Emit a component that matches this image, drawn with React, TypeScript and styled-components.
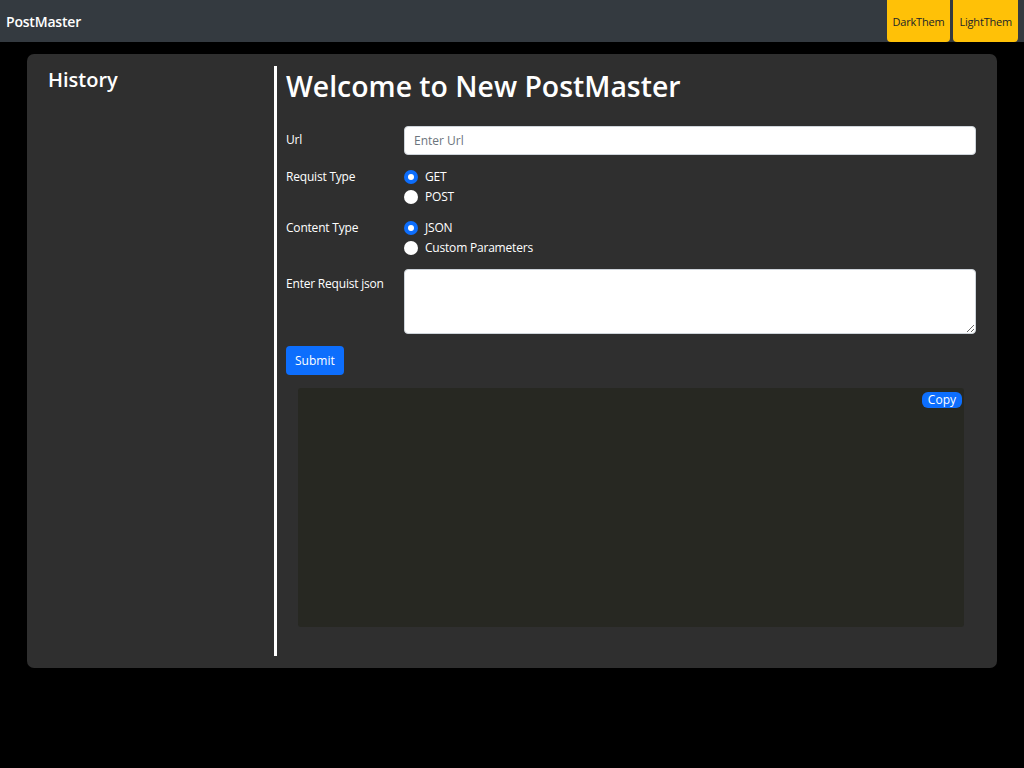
import React from "react";
import styled, { createGlobalStyle } from "styled-components";

const Global = createGlobalStyle`
  html, body { margin: 0; padding: 0; background: #000; }
  body { font-family: "Open Sans", "Noto Sans", sans-serif; color: #fff; }
  * { box-sizing: border-box; }
`;

const Page = styled.div`
  min-height: 768px;
  background: #000;
`;

const NavBar = styled.nav`
  height: 42px;
  background: #343a40;
  display: flex;
  align-items: center;
  justify-content: space-between;
  padding-left: 6px;
  padding-right: 6px;
`;

const Brand = styled.div`
  font-size: 14px;
  font-weight: 600;
  color: #fff;
  letter-spacing: -0.2px;
`;

const ThemeGroup = styled.div`
  display: flex;
  gap: 3px;
  align-self: flex-start;
`;

const ThemeButton = styled.button`
  height: 42px;
  background: #ffc107;
  border: none;
  border-radius: 0 0 4px 4px;
  color: #212529;
  font-family: inherit;
  font-size: 11px;
  padding: 0 6px;
  letter-spacing: -0.2px;
`;

const Card = styled.main`
  margin: 12px 27px 0 27px;
  height: 614px;
  background: #2f2f2f;
  border-radius: 7px;
  display: flex;
  padding: 12px 0;
`;

const Sidebar = styled.aside`
  width: 250px;
  padding-left: 21px;
  border-right: 3px solid #fff;
`;

const SideTitle = styled.h2`
  margin: 0;
  font-size: 20px;
  font-weight: 600;
  line-height: 28px;
`;

const Content = styled.section`
  flex: 1;
  padding-left: 9px;
  padding-right: 21px;
`;

const Title = styled.h1`
  margin: 2px 0 22px 0;
  font-size: 28.4px;
  font-weight: 600;
  line-height: 36px;
`;

const FormRow = styled.div<{ $gap?: number }>`
  display: grid;
  grid-template-columns: 118px 1fr;
  align-items: start;
  margin-bottom: ${(p) => p.$gap ?? 12}px;
`;

const Label = styled.label<{ $top?: number }>`
  font-size: 12px;
  padding-top: ${(p) => p.$top ?? 0}px;
  line-height: 16px;
  letter-spacing: -0.2px;
`;

const TextInput = styled.input`
  width: 100%;
  height: 29px;
  border-radius: 4px;
  border: 1px solid #ced4da;
  padding: 0 9px;
  font-family: inherit;
  font-size: 12px;
  background: #fff;
  &::placeholder { color: #6c757d; }
`;

const TextArea = styled.textarea`
  width: 100%;
  height: 65px;
  border-radius: 4px;
  border: 1px solid #ced4da;
  background: #fff;
  display: block;
`;

const RadioList = styled.div`
  display: flex;
  flex-direction: column;
  gap: 4px;
`;

const RadioItem = styled.label`
  display: flex;
  align-items: center;
  gap: 7px;
  font-size: 12px;
  line-height: 16px;
  letter-spacing: -0.2px;
`;

const RadioDot = styled.span<{ $on?: boolean }>`
  width: 14px;
  height: 14px;
  border-radius: 50%;
  background: ${(p) => (p.$on ? "#0d6efd" : "#fff")};
  display: flex;
  align-items: center;
  justify-content: center;
  flex-shrink: 0;
  &::after {
    content: "";
    width: 6px;
    height: 6px;
    border-radius: 50%;
    background: #fff;
    display: ${(p) => (p.$on ? "block" : "none")};
  }
`;

const SubmitButton = styled.button`
  background: #0d6efd;
  color: #fff;
  border: none;
  border-radius: 4px;
  height: 29px;
  padding: 0 9px;
  font-family: inherit;
  font-size: 12px;
  margin-bottom: 13px;
`;

const CodeBox = styled.div`
  margin: 0 12px;
  height: 239px;
  background: #272822;
  border-radius: 3px;
  position: relative;
`;

const CopyButton = styled.button`
  position: absolute;
  top: 4px;
  right: 2px;
  height: 16px;
  padding: 0 6px;
  background: #0d6efd;
  color: #fff;
  border: none;
  border-radius: 6px;
  font-family: inherit;
  font-size: 12px;
  line-height: 16px;
`;

export default function App() {
  return (
    <Page>
      <Global />
      <NavBar>
        <Brand>PostMaster</Brand>
        <ThemeGroup>
          <ThemeButton>DarkThem</ThemeButton>
          <ThemeButton>LightThem</ThemeButton>
        </ThemeGroup>
      </NavBar>
      <Card>
        <Sidebar>
          <SideTitle>History</SideTitle>
        </Sidebar>
        <Content>
          <Title>Welcome to New PostMaster</Title>
          <FormRow $gap={14}>
            <Label $top={6}>Url</Label>
            <TextInput placeholder="Enter Url" />
          </FormRow>
          <FormRow $gap={15}>
            <Label>Requist Type</Label>
            <RadioList>
              <RadioItem><RadioDot $on />GET</RadioItem>
              <RadioItem><RadioDot />POST</RadioItem>
            </RadioList>
          </FormRow>
          <FormRow $gap={13}>
            <Label>Content Type</Label>
            <RadioList>
              <RadioItem><RadioDot $on />JSON</RadioItem>
              <RadioItem><RadioDot />Custom Parameters</RadioItem>
            </RadioList>
          </FormRow>
          <FormRow $gap={12}>
            <Label $top={7}>Enter Requist json</Label>
            <TextArea />
          </FormRow>
          <SubmitButton>Submit</SubmitButton>
          <CodeBox>
            <CopyButton>Copy</CopyButton>
          </CodeBox>
        </Content>
      </Card>
    </Page>
  );
}
